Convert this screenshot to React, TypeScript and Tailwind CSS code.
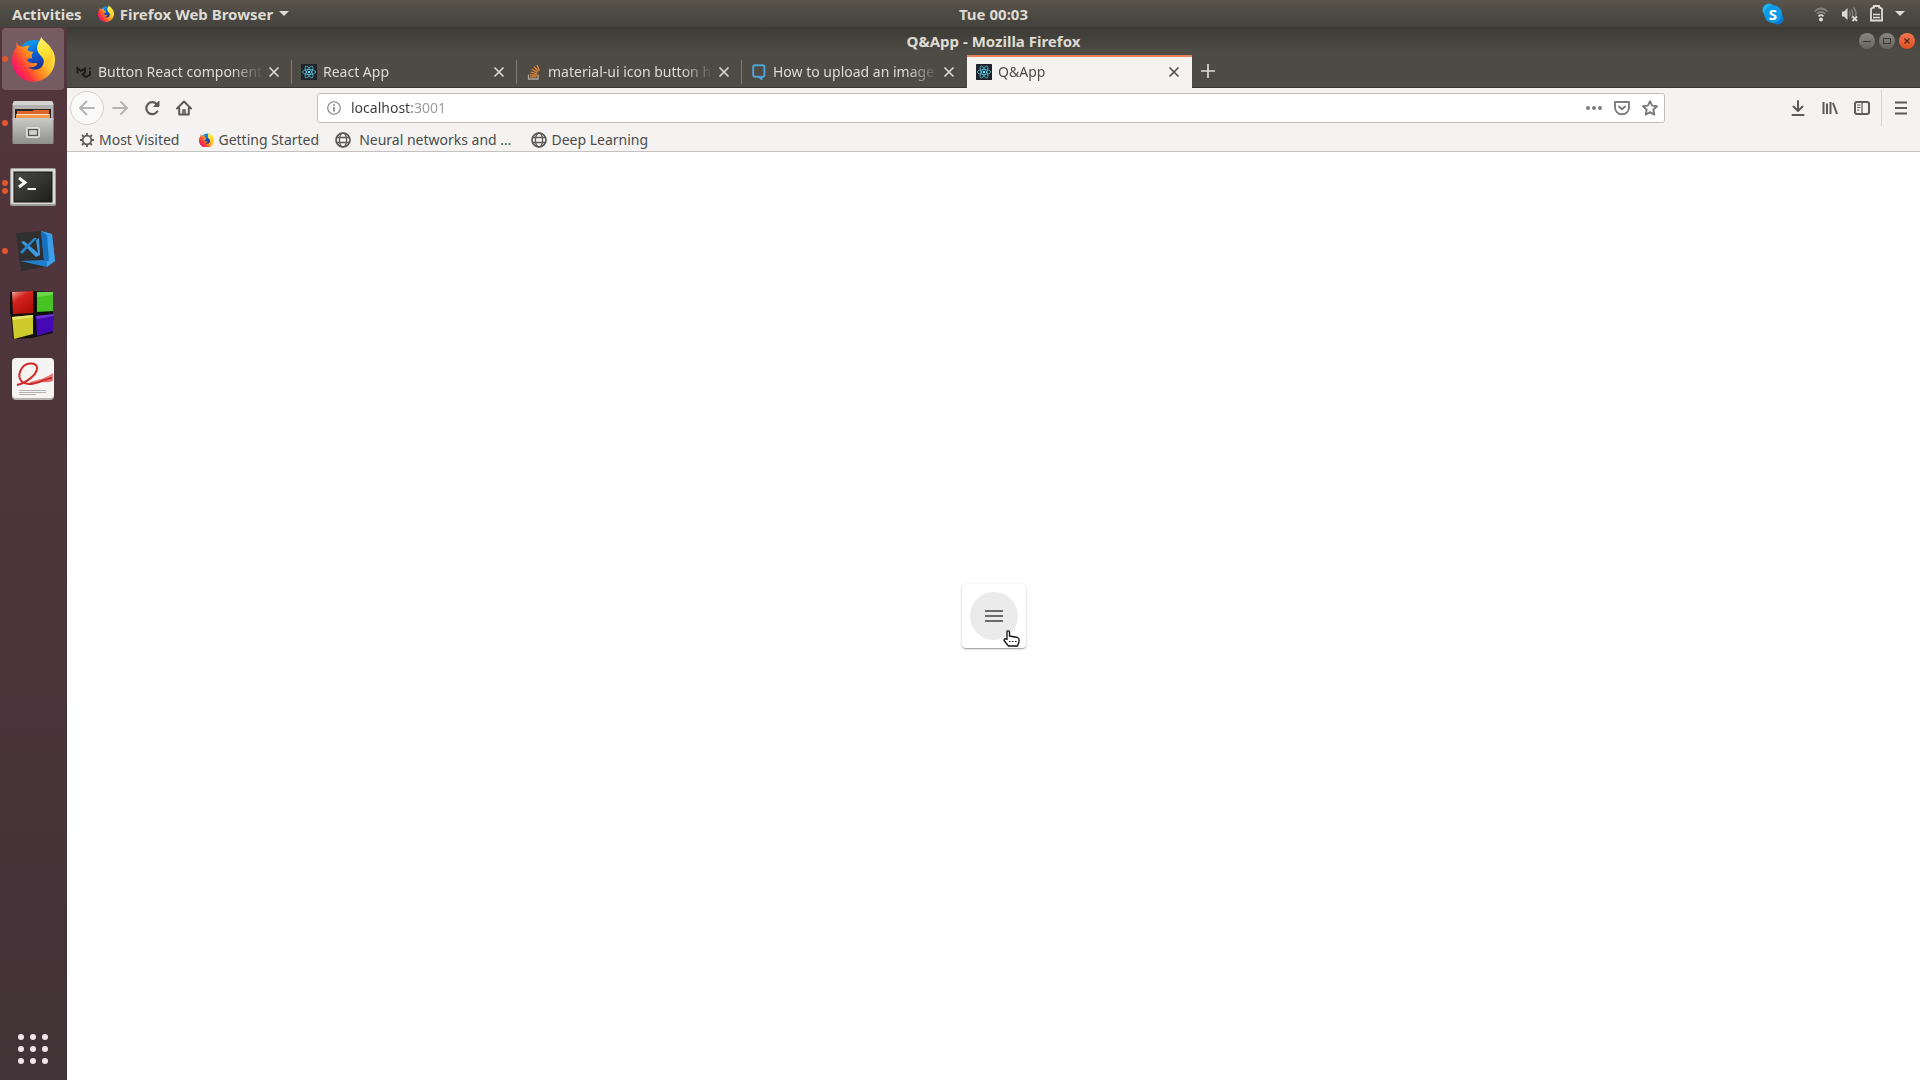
import React, { useId, useState } from "react";

const tabs = [
  { id: 1, title: "Button React component", icon: "mui" },
  { id: 2, title: "React App", icon: "react" },
  { id: 3, title: "material-ui icon button h", icon: "stack" },
  { id: 4, title: "How to upload an image", icon: "chat" },
  { id: 5, title: "Q&App", icon: "react" },
];

function FirefoxLogo({ className }: { className: string }) {
  const id = useId();
  return (
    <svg viewBox="0 0 130 138" className={className} aria-hidden="true">
      <defs>
        <linearGradient id={`${id}body`} x1="0.95" y1="0.2" x2="0.1" y2="0.75">
          <stop offset="0" stopColor="#fff044" />
          <stop offset="0.3" stopColor="#ffc52e" />
          <stop offset="0.55" stopColor="#ff8a1f" />
          <stop offset="0.8" stopColor="#ff3a3c" />
          <stop offset="1" stopColor="#f8166a" />
        </linearGradient>
        <linearGradient id={`${id}globe`} x1="0.3" y1="0" x2="0.7" y2="1">
          <stop offset="0" stopColor="#0aa5f5" />
          <stop offset="0.45" stopColor="#0a5fd6" />
          <stop offset="1" stopColor="#25237c" />
        </linearGradient>
        <linearGradient id={`${id}tail`} x1="0.3" y1="0" x2="0.6" y2="1">
          <stop offset="0" stopColor="#fff36a" />
          <stop offset="0.6" stopColor="#ffe02e" />
          <stop offset="1" stopColor="#ffb52a" />
        </linearGradient>
      </defs>
      <circle cx="67" cy="60" r="48" fill={`url(#${id}globe)`} />
      <path
        fill={`url(#${id}body)`}
        d="M14 18C12 27 14 32 14 34C3 46 0 62 0 76C1 110 30 138 65 138C101 138 130 110 130 72C130 48 117 25 96 40L94 62C99 72 97 86 88 95C77 104 58 104 48 93C58 97 66 94 73 89C79 86 76 81 70 82C60 84 52 80 46 74C45 67 53 66 61 68C60 60 57 57 64 50L61 47C55 47 48 45 47 43C47 38 50 33 54 29C45 28 38 31 34 33C27 30 24 30 22 30C17 28 15 24 14 18Z"
      />
      <path
        fill={`url(#${id}tail)`}
        d="M88 2C87 13 78 18 76 34C75 49 84 55 92 65C99 74 98 84 94 93C108 88 119 77 124 60C124 34 108 25 96 13C92 9 90 6 88 2Z"
      />
    </svg>
  );
}

function ReactLogo() {
  return (
    <svg viewBox="0 0 16 16" className="size-4" aria-hidden="true">
      <rect width="16" height="16" rx="0.6" fill="#20232a" />
      <g fill="none" stroke="#56bfd8" strokeWidth="0.8">
        <ellipse cx="8" cy="8" rx="6.6" ry="2.5" />
        <ellipse cx="8" cy="8" rx="6.6" ry="2.5" transform="rotate(60 8 8)" />
        <ellipse cx="8" cy="8" rx="6.6" ry="2.5" transform="rotate(120 8 8)" />
      </g>
      <circle cx="8" cy="8" r="1.3" fill="#61dafb" />
    </svg>
  );
}

function Favicon({ name }: { name: string }) {
  if (name === "react") return <ReactLogo />;
  if (name === "mui")
    return (
      <svg viewBox="0 0 16 16" className="size-4" fill="none" stroke="#1c1b19" strokeWidth="1.9" aria-hidden="true">
        <path d="M1.500 9.500V4.200L5 7L9 4.500V8.500L6.500 10.500L10 13L14 10.500V6.800M14 5.300V3.800" />
      </svg>
    );
  if (name === "stack")
    return (
      <svg viewBox="0 0 16 16" className="size-4" fill="none" aria-hidden="true">
        <path d="M2.500 10.500V15H12V10.500" stroke="#aaa69e" strokeWidth="1.3" />
        <g stroke="#e8872e" strokeWidth="1.3">
          <path d="M4 12.900H10.600M4.100 10.600L10.700 11.300M4.700 8L11 9.800M6 5.300L11.500 8.500M8.200 2.800L12.300 7.400M11 0.900L13.300 6.600" />
        </g>
      </svg>
    );
  return (
    <svg viewBox="0 0 16 16" className="size-4" fill="none" aria-hidden="true">
      <path d="M4 1.200H11.600Q13.400 1.200 13.400 3V11Q13.400 12.800 11.600 12.800H10.500V15L8 12.800H4Q2.200 12.800 2.200 11V3Q2.200 1.200 4 1.200Z" stroke="#4fa3d8" strokeWidth="1.900" />
    </svg>
  );
}

function Globe() {
  return (
    <svg viewBox="0 0 16 16" className="size-4" fill="none" stroke="#5c5b58" strokeWidth="1.3" aria-hidden="true">
      <circle cx="8" cy="8" r="7" strokeWidth="1.7" />
      <ellipse cx="8" cy="8" rx="3.6" ry="7" />
      <path d="M1.6 5.5H14.4M1.6 10.5H14.4" />
    </svg>
  );
}

function Gear() {
  return (
    <svg viewBox="0 0 16 16" className="size-4" fill="none" stroke="#5c5b58" aria-hidden="true">
      <circle cx="8" cy="8" r="4.3" strokeWidth="1.7" />
      <path
        strokeWidth="1.8"
        d="M8 1V3.6M8 12.4V15M1 8H3.6M12.4 8H15M3 3L4.9 4.9M11.1 11.1L13 13M3 13L4.9 11.1M11.1 4.9L13 3"
      />
    </svg>
  );
}

function FilesIcon() {
  return (
    <svg viewBox="0 0 42 44" className="w-[42px]" aria-hidden="true">
      <defs>
        <linearGradient id="cabinet" x1="0" y1="0" x2="0" y2="1">
          <stop offset="0" stopColor="#c9c9c7" />
          <stop offset="1" stopColor="#8f8f8d" />
        </linearGradient>
      </defs>
      <path d="M3 0H39Q41 0 41.500 4V19H.5V4Q1 0 3 0Z" fill="#b3b2b0" />
      <path d="M3 0H39Q41 0 41.500 4H.5Q1 0 3 0Z" fill="#d4d3d1" />
      <rect x="3" y="8" width="36" height="10" fill="#2c2422" />
      <path d="M5 10H20L22 9H37V18H5Z" fill="#d9662a" />
      <path d="M4 13H38V18H4Z" fill="#f39a4e" />
      <path d="M5 13.500H37" stroke="#ffe2c0" />
      <rect x=".5" y="17" width="41" height="26" rx="1" fill="url(#cabinet)" />
      <rect x="14" y="26" width="14" height="11" rx="2" fill="#dededc" />
      <rect x="16.500" y="28.500" width="9" height="6" fill="#d0d0ce" stroke="#555" strokeWidth="1.300" />
    </svg>
  );
}

function TerminalIcon() {
  return (
    <svg viewBox="0 0 46 38" className="w-[46px]" aria-hidden="true">
      <defs>
        <linearGradient id="screen" x1="0" y1="0" x2="1" y2="1">
          <stop offset="0" stopColor="#484846" />
          <stop offset=".5" stopColor="#343432" />
          <stop offset="1" stopColor="#1c1c1b" />
        </linearGradient>
      </defs>
      <rect width="46" height="38" rx="2" fill="#9c9c9a" />
      <rect x="1" y="1" width="44" height="35" rx="1" fill="#dcdbd9" />
      <rect x="4" y="4" width="38" height="30" fill="url(#screen)" stroke="#161615" />
      <path d="M9 10L15 14.500L9 19" fill="none" stroke="#f4f4f2" strokeWidth="3" />
      <path d="M17.500 21H26" stroke="#f4f4f2" strokeWidth="2" />
    </svg>
  );
}

function CodeIcon() {
  return (
    <svg viewBox="0 0 42 42" className="ml-1 w-[42px]" aria-hidden="true">
      <path d="M2 3L29 1L37 5L36 36L7 41Z" fill="#2f2f30" />
      <path d="M27 1L38 4L41 31L33 37L6 31L30 30Z" fill="#1f7fcb" />
      <path d="M27 1L38 4L41 31L33 37L33 6Z" fill="#3b9ee6" />
      <path d="M27 1L33 5L35 31H30Z" fill="#1770bd" />
      <path d="M7 12L10 11L24 23L22 10L25 8L26 25L22 27Z" fill="#3a99df" />
      <path d="M23 8L8 24L6 22L20 8Z" fill="#2588d3" />
    </svg>
  );
}

function BlocksIcon() {
  return (
    <svg viewBox="0 0 44 48" className="mr-0.5 w-11" aria-hidden="true">
      <defs>
        <linearGradient id="red" x1="0" y1="0" x2=".6" y2="1">
          <stop offset="0" stopColor="#f3a49b" />
          <stop offset=".4" stopColor="#d3231c" />
          <stop offset="1" stopColor="#b30f0a" />
        </linearGradient>
      </defs>
      <path d="M0 1L22 0L43 1V22L43 42L26 46L22 47L3 48L1 26L0 22Z" fill="#101010" />
      <path d="M2 1L23 0V22L3 23Z" fill="url(#red)" />
      <path d="M27 1H43V20L27 21Z" fill="#47c421" />
      <path d="M27 1H43V4L27 6Z" fill="#6ad64b" />
      <path d="M2 26L23 24V43L4 48Z" fill="#cfca2b" />
      <path d="M2 26L23 24V26L3 29Z" fill="#e9e56a" />
      <path d="M26 25L44 23L43 40L27 45Z" fill="#4409b4" />
      <path d="M26 25L44 23V25L27 28Z" fill="#6a38cf" />
    </svg>
  );
}

function DocumentIcon() {
  return (
    <svg viewBox="0 0 42 42" className="w-[42px]" aria-hidden="true">
      <rect y="1" width="42" height="41" rx="4" fill="#b9b4b4" />
      <rect width="42" height="40" rx="4" fill="#f5f4f3" />
      <path d="M18 24C26 22 34 20 41 15V23C34 26 29 22 18 26Z" fill="#e37a78" />
      <path
        d="M5 27C14 25 25 17 25 10C25 4 14 4 10 10C4 19 9 26 17 26C25 26 33 21 40 20"
        fill="none"
        stroke="#cf2b2b"
        strokeWidth="2"
      />
      <path d="M7 32.500H34M7 34.500H34M7 36.500H24" stroke="#b5b3b1" />
    </svg>
  );
}

const dockItems = [
  { name: "Firefox Web Browser", icon: <FirefoxLogo className="w-[43px]" />, windows: 1, active: true },
  { name: "Files", icon: <FilesIcon />, windows: 1 },
  { name: "Terminal", icon: <TerminalIcon />, windows: 2 },
  { name: "Visual Studio Code", icon: <CodeIcon />, windows: 1 },
  { name: "Blocks", icon: <BlocksIcon />, windows: 0 },
  { name: "Document Viewer", icon: <DocumentIcon />, windows: 0 },
];

function TopBar() {
  return (
    <header className="grid h-[27px] shrink-0 grid-cols-[67px_1fr_auto_1fr] items-center bg-linear-to-b from-[#5a554c] via-[#4b4a44] to-[#44433d] text-[15px] leading-6 font-bold text-[#dfdbd2]">
      <div className="col-span-2 flex items-center pl-3">
        <button className="mr-4">Activities</button>
        <button className="flex items-center">
          <FirefoxLogo className="mr-1.5 w-4" />
          Firefox Web Browser
          <svg viewBox="0 0 10 5" className="ml-1.5 w-2.5" fill="currentColor" aria-hidden="true">
            <path d="M0 0H10L5 5Z" />
          </svg>
        </button>
      </div>
      <time>Tue 00:03</time>
      <div className="flex items-center justify-end pr-[15px]">
        <button aria-label="Skype" className="mr-[29px]">
          <svg viewBox="0 0 22 22" className="size-[22px]" aria-hidden="true">
            <circle cx="7" cy="7" r="6.500" fill="#1fb4ee" />
            <circle cx="15.500" cy="15.500" r="6" fill="#0a78d0" />
            <circle cx="11" cy="11" r="9" fill="#0f9ae6" />
            <text x="11" y="16.500" textAnchor="middle" fontSize="15" fill="#fff">S</text>
          </svg>
        </button>
        <button aria-label="Network" className="mr-3">
          <svg viewBox="0 0 16 16" className="size-4" fill="none" strokeWidth="1.700" aria-hidden="true">
            <path d="M1.500 5.500Q8 -.5 14.500 5.500" stroke="#85827a" />
            <path d="M3.700 8Q8 4 12.300 8" stroke="#85827a" />
            <path d="M5.500 10.300Q8 8 10.500 10.300" stroke="#dfdbd2" />
            <circle cx="8" cy="13.500" r="2" fill="#dfdbd2" />
          </svg>
        </button>
        <button aria-label="Volume" className="mr-3">
          <svg viewBox="0 0 17 16" className="h-4 w-[17px]" fill="none" aria-hidden="true">
            <path d="M1 5.500H3L6.500 2V14L3 10.500H1Z" fill="#dfdbd2" />
            <path d="M8.500 5.500Q10 8 8.500 10.500M10.500 3.500Q13 8 10.500 12.500M12.500 1.500Q16 6 14.500 10" stroke="#85827a" strokeWidth="1.400" />
            <path d="M11.500 10.500L16 15M16 10.500L11.500 15" stroke="#dfdbd2" strokeWidth="1.800" />
          </svg>
        </button>
        <button aria-label="Battery" className="mr-3">
          <svg viewBox="0 0 13 17" className="h-[17px] w-[13px]" fill="none" stroke="#dfdbd2" aria-hidden="true">
            <path d="M1 15.500V4L3 2.500H4V1H9V2.500H10L12 4V15.500Z" strokeWidth="1.800" />
            <path d="M3 9.500H10M3 12.500H10" strokeWidth="1.500" />
          </svg>
        </button>
        <button aria-label="System menu">
          <svg viewBox="0 0 10 5" className="w-2.5" fill="currentColor" aria-hidden="true">
            <path d="M0 0H10L5 5Z" />
          </svg>
        </button>
      </div>
    </header>
  );
}

function Dock() {
  return (
    <nav aria-label="Dock" className="flex w-[67px] shrink-0 flex-col items-center justify-between bg-linear-to-b from-[#54353e] to-[#413337] pt-px pr-px pb-3">
      <ul className="flex flex-col gap-0.5">
        {dockItems.map((item) => (
          <li key={item.name} className="relative">
            <button
              aria-label={item.name}
              className={`flex size-[62px] items-center justify-center rounded-sm ${item.active ? "bg-[#755c63]" : ""}`}
            >
              {item.icon}
            </button>
            <span className="absolute inset-y-0 left-0 flex flex-col justify-center gap-0.5">
              {Array.from({ length: item.windows }).map((_, i) => (
                <i key={i} className="size-1.5 rounded-full bg-[#e2572b]" />
              ))}
            </span>
          </li>
        ))}
      </ul>
      <button aria-label="Show Applications" className="grid grid-cols-3 gap-1.5 p-1">
        {Array.from({ length: 9 }).map((_, i) => (
          <i key={i} className="size-1.5 rounded-full bg-[#f3e6ea]" />
        ))}
      </button>
    </nav>
  );
}

function TitleBar() {
  return (
    <div className="grid h-7 grid-cols-[1fr_auto_1fr] items-center text-[15px] leading-6 font-bold text-[#dfdbd2]">
      <h1 className="col-start-2">Q&amp;App - Mozilla Firefox</h1>
      <div className="flex justify-end gap-1 pr-[5px]">
        <button aria-label="Minimize" className="flex size-4 items-center justify-center rounded-full bg-linear-to-b from-[#8b8880] to-[#66645d] text-[#3a3935]">
          <svg viewBox="0 0 10 10" className="size-2.5" stroke="currentColor" aria-hidden="true">
            <path d="M1 5.500H9" />
          </svg>
        </button>
        <button aria-label="Maximize" className="flex size-4 items-center justify-center rounded-full bg-linear-to-b from-[#8b8880] to-[#66645d] text-[#3a3935]">
          <svg viewBox="0 0 10 10" className="size-2.5" fill="none" stroke="currentColor" aria-hidden="true">
            <path d="M1.500 2.500H8.500V7.500H1.500Z" />
          </svg>
        </button>
        <button aria-label="Close window" className="flex size-4 items-center justify-center rounded-full bg-linear-to-b from-[#f4764d] to-[#e04e1f] text-[#4c2a1d]">
          <svg viewBox="0 0 10 10" className="size-2.5" stroke="currentColor" strokeWidth="1.200" aria-hidden="true">
            <path d="M2.500 2.500L7.500 7.500M7.500 2.500L2.500 7.500" />
          </svg>
        </button>
      </div>
    </div>
  );
}

function TabStrip() {
  const [activeTab, setActiveTab] = useState(5);

  return (
    <div className="flex h-[33px] items-stretch border-b border-[#38372f] text-sm">
      {tabs.map((tab) => {
        const active = tab.id === activeTab;
        return (
          <div
            key={tab.id}
            className={`relative flex w-[225px] items-center border-t-2 pr-3 pl-[9px] ${
              active ? "-mb-px border-[#e8825a] bg-[#f4f3f2] pb-px text-[#4c4c4c]" : "border-transparent text-[#dfdbd2]"
            }`}
          >
            <button onClick={() => setActiveTab(tab.id)} className="flex min-w-0 flex-1 items-center gap-1.5">
              <Favicon name={tab.icon} />
              <span className="flex-1 overflow-hidden mask-[linear-gradient(to_right,black_calc(100%-32px),transparent)] text-left whitespace-nowrap">
                {tab.title}
              </span>
            </button>
            <button aria-label={`Close ${tab.title}`} className="ml-1">
              <svg viewBox="0 0 12 12" className="size-3" stroke="currentColor" strokeWidth="1.600" aria-hidden="true">
                <path d="M1.500 1.500L10.500 10.500M10.500 1.500L1.500 10.500" />
              </svg>
            </button>
            {tab.id + 1 !== activeTab && !active && <span className="absolute right-0 h-6 w-px bg-[#7b7971]" />}
          </div>
        );
      })}
      <button aria-label="New tab" className="px-[9px] text-[#dfdbd2]">
        <svg viewBox="0 0 14 14" className="size-3.5" stroke="currentColor" strokeWidth="1.700" aria-hidden="true">
          <path d="M7 0V14M0 7H14" />
        </svg>
      </button>
    </div>
  );
}

function ToolbarButton({ label, children }: { label: string; children: React.ReactNode }) {
  return (
    <button aria-label={label} className="flex size-8 items-center justify-center">
      <svg viewBox="0 0 16 16" className="size-4" fill="none" stroke="currentColor" strokeWidth="2" strokeLinecap="round" strokeLinejoin="round" aria-hidden="true">
        {children}
      </svg>
    </button>
  );
}

function NavBar() {
  const [url, setUrl] = useState("localhost:3001");

  return (
    <div className="flex h-10 items-center pr-[3px] pl-[3px] text-[#5c5b58]">
      <button aria-label="Back" className="flex size-[34px] items-center justify-center rounded-full border border-[#d2d1cf] bg-[#fafafa] text-[#b5b4b2]">
        <svg viewBox="0 0 16 16" className="size-4" fill="none" stroke="currentColor" strokeWidth="1.800" strokeLinecap="round" strokeLinejoin="round" aria-hidden="true">
          <path d="M15 8H1.500M7.500 1.500L1 8L7.500 14.500" />
        </svg>
      </button>
      <div className="flex text-[#b5b4b2]">
        <ToolbarButton label="Forward">
          <path d="M1 8H14.500M9 2L15 8L9 14" strokeWidth="1.800" />
        </ToolbarButton>
      </div>
      <ToolbarButton label="Reload">
        <path d="M13.300 11.500A6 6 0 1 1 13 4.500" strokeWidth="2.200" />
        <path d="M15 1.500V6.500H10Z" fill="currentColor" strokeWidth="1" />
      </ToolbarButton>
      <ToolbarButton label="Home">
        <path d="M1 8.500L8 1.500L15 8.500M3.200 8V14.500H12.800V8" />
        <path d="M7 14V10H9V14" strokeWidth="1.600" />
      </ToolbarButton>
      <div className="mx-[117px] flex h-[30px] flex-1 items-center rounded-[3px] border border-[#bfbebc] bg-white pl-[9px] text-[#7d7c7a]">
        <button aria-label="Site information">
          <svg viewBox="0 0 14 14" className="size-3.5" fill="none" stroke="currentColor" aria-hidden="true">
            <circle cx="7" cy="7" r="6.300" strokeWidth="1.100" />
            <path d="M7 6V10.500M7 3.200V4.800" strokeWidth="1.600" />
          </svg>
        </button>
        <input
          type="text"
          aria-label="Address"
          value={url}
          onChange={(e) => setUrl(e.target.value)}
          className="ml-2.5 min-w-0 flex-1 bg-[linear-gradient(to_right,#3a3a3a_61px,#9b9a98_61px)] bg-clip-text text-sm text-transparent caret-black outline-none"
        />
        <button aria-label="Page actions" className="flex w-7 justify-center">
          <svg viewBox="0 0 16 16" className="size-4" fill="currentColor" aria-hidden="true">
            <circle cx="2" cy="8" r="2" />
            <circle cx="8" cy="8" r="2" />
            <circle cx="14" cy="8" r="2" />
          </svg>
        </button>
        <button aria-label="Save to Pocket" className="flex w-7 justify-center">
          <svg viewBox="0 0 16 16" className="size-4" fill="none" stroke="currentColor" strokeWidth="1.900" strokeLinejoin="round" strokeLinecap="round" aria-hidden="true">
            <path d="M1 2H15V7.500A7 6.800 0 0 1 1 7.500Z" />
            <path d="M5 6.500L8 9.300L11 6.500" />
          </svg>
        </button>
        <button aria-label="Bookmark this page" className="flex w-7 justify-center">
          <svg viewBox="0 0 16 16" className="size-4" fill="none" stroke="currentColor" strokeWidth="1.900" strokeLinejoin="round" aria-hidden="true">
            <path d="M8 1.200L10.100 5.600L15 6.200L11.400 9.500L12.300 14.600L8 12.200L3.700 14.600L4.600 9.500L1 6.200L5.900 5.600Z" />
          </svg>
        </button>
      </div>
      <ToolbarButton label="Downloads">
        <path d="M8 1V10.500M3.500 6.500L8 11L12.500 6.500M2.500 15H13.500" />
      </ToolbarButton>
      <ToolbarButton label="Library">
        <path d="M1.500 2V14M5 3.500V14M8.500 2V14M11 3L15 14" strokeLinecap="butt" />
      </ToolbarButton>
      <ToolbarButton label="Sidebars">
        <rect x="1" y="2" width="14" height="12" rx="2" />
        <path d="M8 2V14" strokeWidth="1.200" />
        <path d="M3.500 5H6M3.500 7.500H6M3.500 10H5" strokeWidth="1" />
      </ToolbarButton>
      <span className="ml-[3px] h-9 w-px bg-[#d5d4d2]" />
      <div className="ml-[3px] flex">
        <ToolbarButton label="Open menu">
          <path d="M2 2.500H14M2 8H14M2 13.500H14" strokeLinecap="butt" />
        </ToolbarButton>
      </div>
    </div>
  );
}

function Bookmarks() {
  return (
    <div className="flex h-[23px] items-center pl-3 text-sm text-[#4c4c4c]">
      <a href="#most-visited" className="mr-5 flex items-center gap-1">
        <Gear />
        Most Visited
      </a>
      <a href="#getting-started" className="mr-4 flex items-center gap-1">
        <FirefoxLogo className="w-[15px]" />
        Getting Started
      </a>
      <a href="#neural-networks" className="mr-5 flex items-center gap-2">
        <Globe />
        Neural networks and …
      </a>
      <a href="#deep-learning" className="flex items-center gap-1">
        <Globe />
        Deep Learning
      </a>
    </div>
  );
}

export default function App() {
  return (
    <div className="flex min-h-screen flex-col font-['Noto_Sans','Open_Sans',sans-serif]">
      <TopBar />
      <div className="flex flex-1">
        <Dock />
        <div className="flex min-w-0 flex-1 flex-col">
          {/* Window frame */}
          <div className="bg-[#4d4b44] bg-[linear-gradient(to_bottom,#3b3a35,#4d4b44_24px)]">
            <TitleBar />
            <TabStrip />
          </div>
          <div className="border-b border-[#c3c2c0] bg-[#f4f3f2]">
            <NavBar />
            <Bookmarks />
          </div>

          {/* Page */}
          <main className="flex flex-1 items-center justify-center bg-white">
            <div className="relative rounded-sm bg-white p-2 shadow-[0_1px_3px_rgba(0,0,0,0.2),0_1px_1px_rgba(0,0,0,0.14),0_2px_1px_-1px_rgba(0,0,0,0.12)]">
              <button aria-label="Menu" className="flex size-12 items-center justify-center rounded-full bg-[#ebebeb] text-[#6b6b6b]">
                <svg viewBox="0 0 24 24" className="size-6" fill="currentColor" aria-hidden="true">
                  <path d="M3 18h18v-2H3v2zm0-5h18v-2H3v2zm0-7v2h18V6H3z" />
                </svg>
              </button>
              {/* Pointer */}
              <svg viewBox="0 0 17 17" className="pointer-events-none absolute right-1.5 bottom-px size-[17px]" fill="#fff" stroke="#111" strokeWidth="1.300" strokeLinejoin="round" aria-hidden="true">
                <path d="M4 9.500V2Q4 .8 5.300 .8Q6.500 .8 6.500 2V6L14.500 7.500Q16 8 16 9.500V12L14.500 16H5.500L1 10.500Q.8 8.500 2.500 8.800Z" />
                <path d="M6 11.500H14" strokeDasharray="1.500 1.500" strokeWidth="1" />
              </svg>
            </div>
          </main>
        </div>
      </div>
    </div>
  );
}
